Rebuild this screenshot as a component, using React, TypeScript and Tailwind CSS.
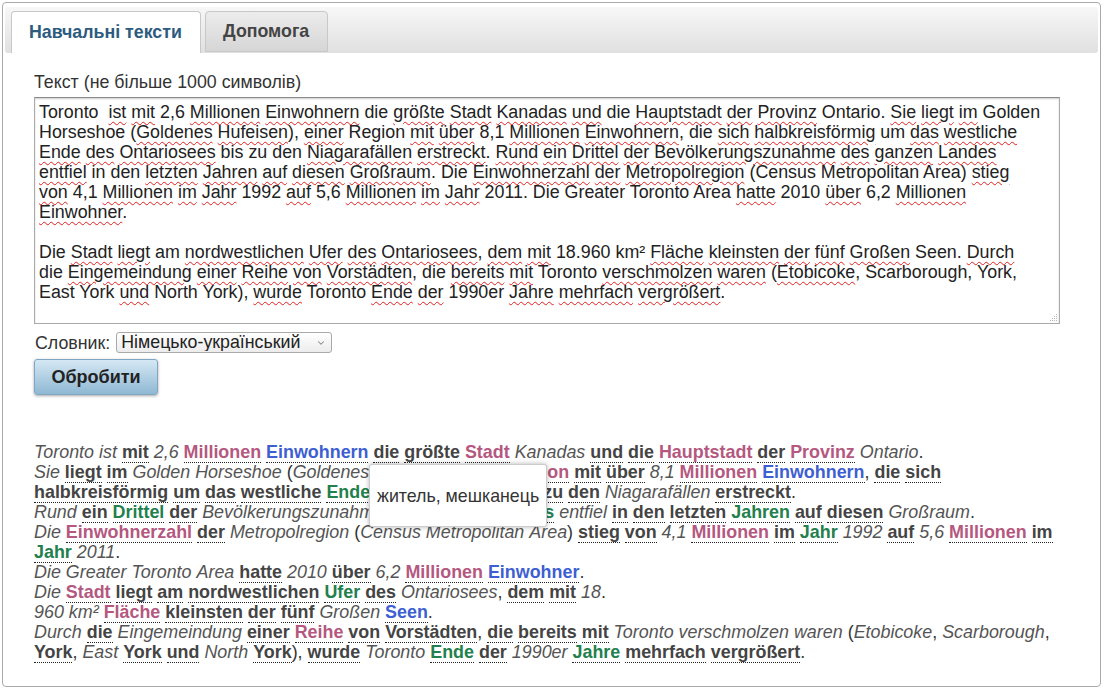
import { Fragment } from "react";
import { ChevronDown } from "lucide-react";

// ~ = mot souligné par le correcteur
const para1 =
  "Toronto  ~ist ~mit 2,6 ~Millionen ~Einwohnern die ~größte ~Stadt ~Kanadas ~und die ~Hauptstadt ~der ~Provinz Ontario. ~Sie ~liegt ~im Golden Horseshoe (~Goldenes ~Hufeisen), ~einer Region ~mit ~über 8,1 ~Millionen ~Einwohnern, die ~sich ~halbkreisförmig um ~das ~westliche ~Ende ~des ~Ontariosees bis zu den ~Niagarafällen ~erstreckt. ~Rund ~ein ~Drittel ~der ~Bevölkerungszunahme ~des ~ganzen ~Landes ~entfiel in den ~letzten ~Jahren ~auf ~diesen ~Großraum. Die ~Einwohnerzahl ~der ~Metropolregion (Census Metropolitan Area) ~stieg ~von 4,1 ~Millionen ~im ~Jahr 1992 ~auf 5,6 ~Millionen ~im ~Jahr 2011. Die Greater Toronto Area ~hatte 2010 ~über 6,2 ~Millionen ~Einwohner.";
const para2 =
  "Die ~Stadt ~liegt am ~nordwestlichen ~Ufer ~des ~Ontariosees, ~dem ~mit 18.960 km² ~Fläche ~kleinsten ~der ~fünf ~Großen Seen. ~Durch die ~Eingemeindung ~einer ~Reihe ~von ~Vorstädten, die ~bereits ~mit Toronto ~verschmolzen ~waren (~Etobicoke, Scarborough, York, East York ~und North York), ~wurde Toronto ~Ende ~der 1990er ~Jahre ~mehrfach ~vergrößert.";

// * = gras, + = rose, ^ = bleu, = = vert, rien = italique
const sentences = [
  "Toronto ist *mit 2,6 +Millionen ^Einwohnern *die *größte +Stadt Kanadas *und *die +Hauptstadt *der +Provinz Ontario.",
  "Sie *liegt *im Golden Horseshoe (Goldenes Hufeisen), *einer +Region *mit *über 8,1 +Millionen ^Einwohnern, *die *sich *halbkreisförmig *um *das *westliche =Ende *des Ontariosees *bis *zu *den Niagarafällen *erstreckt.",
  "Rund *ein =Drittel *der Bevölkerungszunahme *des *ganzen =Landes entfiel *in *den *letzten =Jahren *auf *diesen Großraum.",
  "Die +Einwohnerzahl *der Metropolregion (Census Metropolitan Area) *stieg *von 4,1 +Millionen *im =Jahr 1992 *auf 5,6 +Millionen *im =Jahr 2011.",
  "Die Greater Toronto Area *hatte 2010 *über 6,2 +Millionen ^Einwohner.",
  "Die +Stadt *liegt *am *nordwestlichen =Ufer *des Ontariosees, *dem *mit 18.",
  "960 km² +Fläche *kleinsten *der *fünf Großen ^Seen.",
  "Durch *die Eingemeindung *einer +Reihe *von *Vorstädten, *die *bereits *mit Toronto verschmolzen waren (Etobicoke, Scarborough, *York, East *York *und North *York), *wurde Toronto =Ende *der 1990er =Jahre *mehrfach *vergrößert.",
];

type Kind = "i" | "b" | "p" | "u" | "g";
const marks: Record<string, Kind> = { "*": "b", "+": "p", "^": "u", "=": "g" };
const kindClass: Record<Kind, string> = {
  i: "italic text-[#555]",
  b: "font-bold text-[#444] border-b border-dotted border-[#222]",
  p: "font-bold text-[#b5587f] border-b border-dotted border-[#222]",
  u: "font-bold text-[#3d5fd2] border-b border-dotted border-[#222]",
  g: "font-bold text-[#22804d] border-b border-dotted border-[#222]",
};

function SpellText({ text }: { text: string }) {
  const parts = text.split(/( +)/);
  return (
    <>
      {parts.map((p, i) => {
        if (p.trim() === "") return <Fragment key={i}>{p}</Fragment>;
        const m = p.match(/^(\(?)(~?)(.+?)([.,)]*)$/)!;
        return (
          <Fragment key={i}>
            {m[1]}
            {m[2] ? (
              <span className="underline decoration-wavy decoration-[#e02020] decoration-1 underline-offset-[3px]">
                {m[3]}
              </span>
            ) : (
              m[3]
            )}
            {m[4]}
          </Fragment>
        );
      })}
    </>
  );
}

function Sentence({ text }: { text: string }) {
  const tokens = text.split(" ");
  return (
    <div>
      {tokens.map((tok, idx) => {
        const m = tok.match(/^(\(?)([*+^=]?)(.+?)([.,)]*)$/)!;
        const kind = marks[m[2]] ?? "i";
        return (
          <Fragment key={idx}>
            {idx > 0 && " "}
            {m[1]}
            <span className={kindClass[kind]}>{m[3]}</span>
            {m[4]}
          </Fragment>
        );
      })}
    </div>
  );
}

export default function App() {
  return (
    <div className="m-[2px] h-[685px] w-[1099px] rounded border border-[#aaa] bg-white px-[2px] pt-[4px] font-['Liberation_Sans',Arial,sans-serif] text-[#333]">
      {/* Onglets */}
      <div className="flex h-[46px] items-end gap-[4px] rounded-[3px] bg-gradient-to-b from-[#f7f7f7] to-[#e0e0e0] px-[6px]">
        <div className="flex h-[42px] w-[190px] items-center rounded-t-[4px] border border-b-0 border-[#c8c8c8] bg-white pl-[17px] text-[17.8px] font-bold text-[#2b5b7e]">
          Навчальні тексти
        </div>
        <div className="mb-px flex h-[41px] w-[123px] items-center rounded-t-[4px] border border-[#c8c8c8] bg-gradient-to-b from-[#ececec] to-[#d6d6d6] pl-[17px] text-[17.8px] font-bold text-[#444]">
          Допомога
        </div>
      </div>

      {/* Contenu */}
      <div className="pl-[29px] pt-[19px]">
        <div className="text-[17.8px] leading-5">Текст (не більше 1000 символів)</div>

        <div className="relative mt-[5px] h-[227px] w-[1026px] whitespace-pre-wrap border border-[#aaa] border-t-[#8a8a8a] pl-[4px] pr-[16px] pt-[4px] text-[17.85px] leading-5 text-[#222] shadow-[inset_0_1px_2px_rgba(0,0,0,0.2)]">
          <div>
            <SpellText text={para1} />
          </div>
          <div className="h-5" />
          <div>
            <SpellText text={para2} />
          </div>
          <svg className="absolute bottom-[1px] right-[1px]" width="10" height="10" viewBox="0 0 10 10">
            <g fill="#b5b5b5">
              <rect x="8" y="2" width="1" height="1" />
              <rect x="6" y="4" width="1" height="1" />
              <rect x="8" y="4" width="1" height="1" />
              <rect x="4" y="6" width="1" height="1" />
              <rect x="6" y="6" width="1" height="1" />
              <rect x="8" y="6" width="1" height="1" />
              <rect x="2" y="8" width="1" height="1" />
              <rect x="4" y="8" width="1" height="1" />
              <rect x="6" y="8" width="1" height="1" />
              <rect x="8" y="8" width="1" height="1" />
            </g>
          </svg>
        </div>

        <div className="mt-[8px] flex h-[21px] items-center gap-[6px] text-[17.8px] leading-5">
          <span className="pl-px">Словник:</span>
          <div className="relative flex">
            <select className="h-[21px] w-[216px] appearance-none rounded-[3px] border border-[#aaa] bg-gradient-to-b from-white to-[#ececec] pl-[4px] text-[17.8px] leading-none text-[#222]">
              <option>Німецько-український</option>
            </select>
            <ChevronDown className="pointer-events-none absolute right-[6px] top-[6px] h-[10px] w-[10px] text-[#888]" strokeWidth={2.5} />
          </div>
        </div>

        <button className="mt-[6px] block h-9 w-[124px] rounded-[3px] border border-[#7fa7c4] bg-gradient-to-b from-[#d5e8f4] to-[#8fb8d3] text-[18px] font-bold text-[#222] shadow-[0_1px_3px_rgba(0,0,0,0.35)]">
          Обробити
        </button>

        {/* Résultat */}
        <div className="relative mt-[47px] w-[1026px] text-[17.9px] leading-5 text-[#333]">
          {sentences.map((s, i) => (
            <Sentence key={i} text={s} />
          ))}
          <div className="absolute left-[335px] top-[22px] flex h-[63px] items-center whitespace-nowrap rounded-[3px] border border-[#ccc] bg-white px-[7px] text-[17.8px] text-[#333] shadow-[0_0_5px_rgba(0,0,0,0.3)]">
            житель, мешканець
          </div>
        </div>
      </div>
    </div>
  );
}
